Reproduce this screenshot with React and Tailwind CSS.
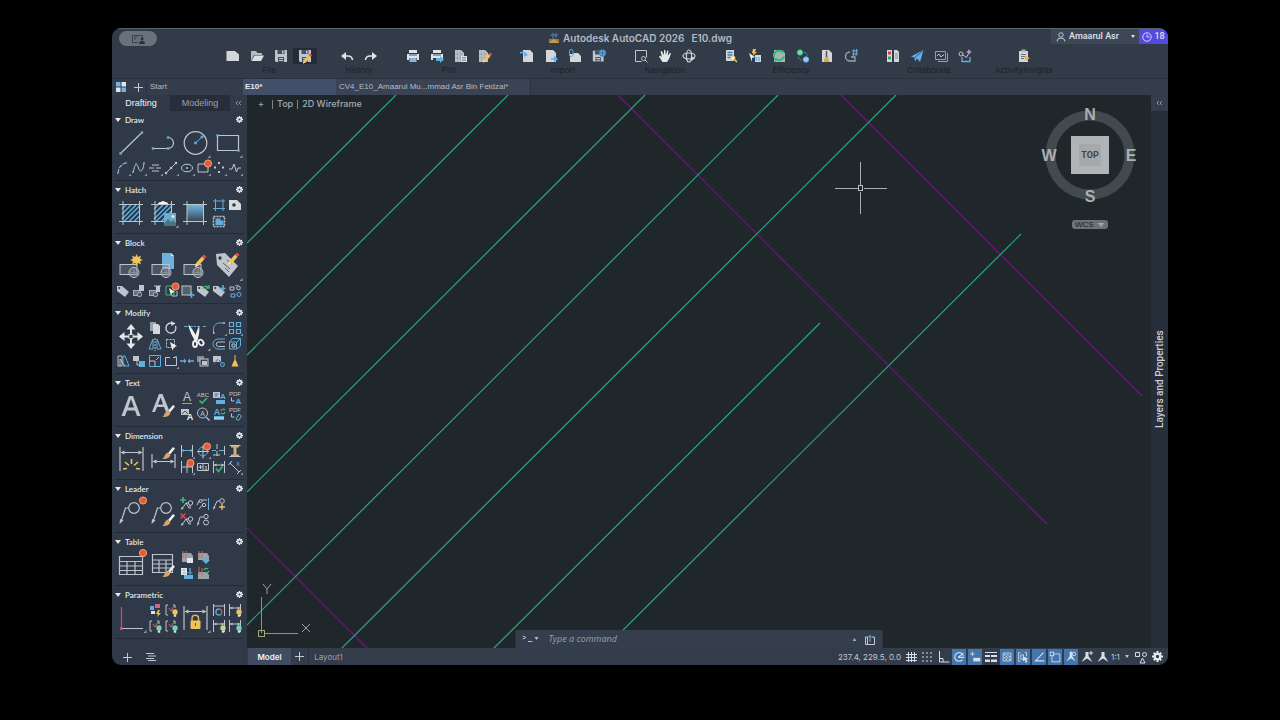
import React from "react";

const G = "#bfc5cd";
const B = "#62aede";
const Y = "#efc35a";
const N = "#39b877";
const R = "#ea5a2e";

const S = ({ d, c = G, w = 1, dash }) => (
  <path d={d} fill="none" stroke={c} strokeWidth={w} strokeDasharray={dash} />
);
const F = ({ d, c = G }) => <path d={d} fill={c} />;
const C = ({ x, y, r, c = G, f = "none", w = 1 }) => (
  <circle cx={x} cy={y} r={r} stroke={c} fill={f} strokeWidth={w} />
);
const Dots = ({ at, c = B, s = 2 }) =>
  at.map(([x, y]) => <rect key={x + "," + y} x={x - s / 2} y={y - s / 2} width={s} height={s} fill={c} />);
const T = ({ x, y, s, c = G, children, b }) => (
  <text x={x} y={y} fontSize={s} fill={c} fontWeight={b ? 700 : 400} textAnchor="middle" fontFamily="Liberation Sans, sans-serif">
    {children}
  </text>
);
const At = ({ x, y, children }) => <g transform={`translate(${x} ${y})`}>{children}</g>;

const Badge = ({ x, y, r = 3.6 }) => <circle cx={x} cy={y} r={r} fill={R} stroke="#f2b7a0" strokeWidth=".8" />;
const Brush = () => (
  <>
    <F d="M11 0l2 1.500-5 6L6 6z" c="#eef0f2" />
    <F d="M5.500 5.500l3 2.500c-1 3-4 4.500-8 4 2-1.500 2-5 5-6.500z" c="#d9a566" />
  </>
);
const Pencil = () => (
  <>
    <F d="M1 9L0 13l4-1.500 5.500-6.500L7 2.500z" c={Y} />
    <F d="M7 2.500L9.500 5l2-2L9 .5z" c="#e5503f" />
    <F d="M1 10L0 13l3-1.200z" c="#f4ead2" />
  </>
);
const Bulb = ({ c = Y }) => (
  <>
    <circle cx="3" cy="3" r="2.700" fill={c} />
    <F d="M1.800 5.500h2.400v2.200H1.800z" c="#e6e2d0" />
  </>
);
const BlockGlyph = () => (
  <>
    <rect x="5" y="14.500" width="17" height="10" fill="#6f7782" fillOpacity=".45" stroke={G} strokeWidth="1" />
    <circle cx="19" cy="22.500" r="5" fill="#9aa1aa" fillOpacity=".35" stroke={G} />
    <S d="M16 22.500h6M19 19.500v6" c="#8b929c" />
  </>
);
const MiniBlock = () => (
  <>
    <rect x="2.500" y="7.500" width="7" height="5" fill="#68707b" stroke={G} strokeWidth=".8" />
    <circle cx="8.500" cy="11.500" r="2.200" fill="#4a525e" stroke={G} strokeWidth=".8" />
  </>
);
const MiniTag = () => (
  <>
    <F d="M2 3h5l7 6-4 5-8-6z" />
    <circle cx="4.300" cy="5" r="1" fill="#2f3745" />
  </>
);
const HatchFill = () => (
  <>
    <rect x="7" y="8" width="18" height="16" fill="#25384b" />
    <S d="M7 12l4-4M7 17l9-9M7 22l14-14M9.500 24L25 8.500M14.500 24L25 13.500M19.500 24L25 18.500" c={B} w={1.5} />
    <S d="M8 4v24M24.500 4v24M4 7.500h24M4 24.500h24" />
  </>
);
const MiniLeader = () => (
  <>
    <C x={11.5} y={7} r={2.2} />
    <S d="M9.500 7H7L3 13M11 9v4M7 7l3 5" />
    <F d="M2 14l.5-3 2.200 1.500z" />
  </>
);
const MiniDim = () => (
  <>
    <S d="M2.500 2v12M13.500 2v12" />
    <S d="M3 6h10" />
    <F d="M3 6l2.500-1.500v3zM13 6l-2.500-1.500v3z" />
  </>
);
const Floppy = () => (
  <>
    <F d="M2 2h12v12H3l-1-1z" />
    <path d="M4.500 2h7v4h-7zM5 9h6v5H5z" fill="#47505d" />
    <F d="M6 10h4v1H6zM6 12h4v1H6zM9 2.500h1.500v3H9z" />
  </>
);
const Sheet = () => (
  <>
    <F d="M2 2h6l3 3v9H2z" />
    <path d="M4.500 2v12M2 6h8M2 10h8M7.500 2v12" stroke="#8e959e" strokeWidth=".6" />
  </>
);
const Printer = () => (
  <>
    <F d="M4 2h8v3H4zM2 6h12v6h-2v-2H4v2H2z" c="#dfe3e6" />
    <path d="M4 6.500h8v1H4z" fill="#4b5360" />
  </>
);

const big = {
  line: (<><S d="M5.500 26.500L27 5.500" w={1.2} /><Dots at={[[5.5, 26.5], [27, 5.5]]} s={2.4} /></>),
  polyline: (<><S d="M6 21.500h15a5.500 5.500 0 000-11" w={1.2} /><Dots at={[[6, 21.5], [21, 21.5], [21, 10.5]]} s={2.4} /></>),
  circle: (<><C x={16.5} y={16} r={11.3} w={1.2} /><S d="M16.500 16l6.500-6" c={B} /><Dots at={[[16.5, 16], [23, 10]]} s={2.6} /></>),
  rect: (<><S d="M6.500 8.500h21v15h-21z" w={1.2} /><Dots at={[[6.5, 8.5], [27.5, 23.5]]} s={2.4} /></>),
  hatch: <HatchFill />,
  hatchEdit: (<><HatchFill /><F d="M11 7q0-2 3-2 2-2 4 0 3 0 3 2z" c="#f2f4f5" /><rect x="17" y="16" width="12" height="13" fill="#6fa9cf" /><circle cx="26" cy="19.500" r="1.500" fill="#f7e9a8" /><F d="M17 27l4-5 3 3 2-2 3 3v3H17z" c="#49787b" /></>),
  gradient: (<><defs><linearGradient id="fade" x1="0" y1="0" x2="0" y2="1"><stop offset="0" stopColor="#6db6e2" /><stop offset="1" stopColor="#3b4655" /></linearGradient></defs><rect x="8" y="8" width="17" height="16" fill="url(#fade)" /><S d="M8 4v24M24.500 4v24M4 7.500h24M4 24.500h24" /></>),
  blockNew: (<><BlockGlyph /><path d="M21.500 4l1.300 3L26 5.700l-1 3 3 1.300-3 1.200 1 3-3.200-1.200-1.300 3-1.300-3-3.200 1.200 1-3L15 10l3-1.300-1-3L20.200 7z" fill={Y} /></>),
  blockInsert: (<><F d="M15 3h9l3 3v13H15z" c="#6fb0dc" /><F d="M24 3l3 3h-3z" c="#cfe5f4" /><BlockGlyph /></>),
  blockEdit: (<><BlockGlyph /><At x={16} y={4}><Pencil /></At></>),
  tagEdit: (<><F d="M5 4l9-1 13 13-9 11L6 15z" /><circle cx="9" cy="8" r="1.700" fill="#2f3745" /><S d="M12 13l7 6M14 18l4 4M16 10l5 4" c="#59616d" /><At x={17} y={2}><Pencil /></At></>),
  move: (<><S d="M16 6v21M5 16.500h22" c="#e3e6ea" w={2} /><F d="M16 4l4.500 5.500h-9zM16 29l4.500-5.500h-9zM4 16.500l5.500-4.500v9zM28 16.500L22.500 12v9z" c="#e3e6ea" /><rect x="14" y="14.500" width="4" height="4" fill="#2f3745" stroke="#e3e6ea" strokeWidth=".8" /></>),
  trim: (<><S d="M5 6.500h12" c={B} dash="4 1" /><S d="M18 6.500h11" c={B} dash="3 3" /><F d="M9.500 4.500c3 3 7 10 9.500 15l-2.500 2C14 18 9.500 9 9.500 4.500z" c="#f0f2f4" /><F d="M20 6c1 4 0 10-2 15l-3-1c1.500-5 3-10 5-14z" c="#f0f2f4" /><ellipse cx="16" cy="24" rx="2" ry="3" fill="none" stroke="#f0f2f4" strokeWidth="1.800" /><ellipse cx="22" cy="22.500" rx="2.300" ry="3" transform="rotate(-35 22 22.500)" fill="none" stroke="#f0f2f4" strokeWidth="1.800" /></>),
  text: <path d="M6.500 26L14 6h4l7.500 20H22l-2-5.500h-8L10 26zM13 17.500h6L16 9z" fill={G} />,
  textStyle: (<><path d="M5 22L12 4h3.500L22 20l-3 2-2-5h-7l-2 5zM11 14.500h5L13.700 7.500z" fill={G} /><At x={15} y={15}><Brush /></At></>),
  dim: (<><S d="M5 4v24M28 4v24M6 9.500h21" w={1.2} /><F d="M5.500 9.500l4-2v4zM27.500 9.500l-4-2v4z" /><S d="M8 26l4-.5M10 19l4 3.500M16.500 16v5M23 19l-4 3.500M25 26l-4-.5" c={Y} w={1.6} /></>),
  dimStyle: (<><S d="M5 11v14M28 11v14M6 18.500h21" w={1.2} /><F d="M5.500 18.500l4-2v4zM27.500 18.500l-4-2v4z" /><At x={15} y={4}><Brush /></At></>),
  leader: (<><C x={19} y={12} r={5.3} w={1.2} /><S d="M13.500 12h-3L6 26" w={1.2} /><F d="M4.500 28l.5-5 3.500 1.500z" /><Badge x={28} y={4.5} /></>),
  leaderStyle: (<><C x={19} y={12} r={5.3} w={1.2} /><S d="M13.500 12h-3L6 26" w={1.2} /><F d="M4.500 28l.5-5 3.500 1.500z" /><At x={15} y={18}><Brush /></At></>),
  table: (<><S d="M4.500 7.500h23v18h-23zM4.500 12.500h23M4.500 17h23M4.500 21.500h23M12 12.500v13M20 12.500v13" w={1.2} /><Badge x={28} y={4} /></>),
  tableStyle: (<><S d="M5.500 5.500h20v18h-20zM5.500 11h20M5.500 15h20M5.500 19h20M12 11v12M19 11v12" w={1.2} /><At x={15} y={16}><Brush /></At></>),
  constraint: (<><S d="M6.500 5v22" c="#c4506e" w={1.3} /><S d="M6.500 26.500H28" /><F d="M5 25h3v3H5z" c="#c4506e" /></>),
  dimLock: (<><S d="M5 4v24M28 4v24M6 9.500h21" w={1.2} /><F d="M5.500 9.500l4-2v4zM27.500 9.500l-4-2v4z" /><S d="M13 20v-3.500a3.200 3.200 0 016.500 0V20" c="#d7b45b" w={1.5} /><rect x="11.500" y="18.500" width="10" height="8.500" rx="1" fill={Y} /><rect x="16" y="21" width="1" height="3" fill="#6d5523" /></>),
};

const sm = {
  arc: (<><S d="M3 13C4 7 6 4 11 3" dash="4 1" /><Dots at={[[3, 13], [6, 6], [11, 3]]} s={1.6} /></>),
  spline: (<><S d="M2 13C4 3 6 3 7.500 8S12 12 13 3" /><Dots at={[[2, 12], [5, 4], [13, 3]]} s={1.6} /></>),
  multiline: <S d="M5 5h7M2 8h5M5 11h7M9 8h5" />,
  ray: (<><S d="M3 13L13 3" /><Dots at={[[3, 13], [8, 8], [13, 3]]} c={G} s={2.2} /></>),
  ellipse: (<><ellipse cx="8" cy="8" rx="5.500" ry="3.800" fill="none" stroke={G} /><Dots at={[[8, 8]]} /></>),
  region: (<><S d="M3 4h10v8H3z" /><Badge x={13} y={3.5} /></>),
  points: <Dots at={[[8, 3], [4, 7.5], [12, 7.5], [8, 12]]} c={G} />,
  breakline: <S d="M2 9h3l2-5 2.500 8 1.500-4h3" />,
  boundary: <S d="M4.500 2v12M12 2v12M2 4h12M2 11.500h12" c={B} />,
  wipeout: (<><F d="M2 3h8l4 4v6H2z" c="#d8dce0" /><circle cx="7" cy="8" r="1.800" fill="#2f3745" /></>),
  separate: (<><S d="M2.500 3.500h11v10h-11z" dash="2 1" c={G} w={1.5} /><F d="M4.500 5.500h5v2h3v4.500h-8z" c={B} /></>),
  tag: <MiniTag />,
  blk1: (<><MiniBlock /><F d="M8 2h5v6H8z" /></>),
  blk2: (<><MiniBlock /><F d="M9 3h4v6H9z" /><S d="M7 3h7" /></>),
  blk3: (<><S d="M3 3h8v9H3z" c={N} /><F d="M6 5l6 4-3 1-1 3z" c="#eceef0" /><S d="M9 13h5V8" /><Badge x={12.5} y={3.5} /></>),
  blk4: (<><rect x="3" y="3" width="9" height="9" fill="#56606c" stroke={G} /><S d="M12.500 9v6M9.500 12h6" c={B} w={1.5} /></>),
  tagSync: (<><MiniTag /><S d="M8 6a3 3 0 015-2M14 2v3h-3" c={N} w={1.3} /></>),
  tagAdd: (<><MiniTag /><S d="M12 2v7M8.500 5.500h6" c={B} w={1.5} /></>),
  replace: (<><S d="M3 4h4v3H3z" /><C x={11.5} y={5} r={1.8} /><S d="M4 14h4v-3H4z" c={B} /><C x={12} y={11.5} r={2} c={B} /><S d="M8 3q2-2 4 0" c={B} /></>),
  copy: (<><F d="M3 2h6v9H3z" c="#99a0a9" /><F d="M6 4h5l2 2v8H6z" c="#d5d9de" /></>),
  rotate: (<><S d="M10 3.500A5 5 0 1012.500 6" w={1.3} c="#d5d9de" /><F d="M8 1l4.500 2.500L8.500 6z" c="#d5d9de" /></>),
  mirror: (<><S d="M6 3v10H2zM10 3v10h4z" c={B} /><S d="M8 2v13" dash="2 1" /></>),
  select: (<><S d="M3.500 3.500h8v8h-8z" dash="2 1" /><F d="M7 6l7 4-3 1-1.500 3.500z" c="#f0f2f4" /></>),
  fillet: (<><S d="M2.500 14V10C2.500 5 5 3 9 3h5" c={B} /><Dots at={[[3, 13], [13, 3]]} c={G} s={1.5} /></>),
  array: <S d="M2.500 2.500h4v4h-4zM9.500 2.500h4v4h-4zM2.500 9.500h4v4h-4zM9.500 9.500h4v4h-4z" c={B} w={1.2} />,
  offset: (<><S d="M14 3H7a5 5 0 000 10h7" c={B} /><S d="M14 6H7.500a2 2 0 000 4.500H14" /></>),
  box3d: (<><S d="M2.500 6h7v7h-7zM2.500 6l3-3.500h8L10 6M13.500 3v7L10 13" c={B} /><S d="M5 8h3v3H5z" /></>),
  stretch: (<><S d="M3 3h4v10H3z" /><S d="M8 3h2l4 10H8z" c={B} /><S d="M5 13V6l5 7" /></>),
  scaleCopy: (<><F d="M2 3h6v5H2z" /><rect x="8" y="8" width="6" height="6" fill={B} /><S d="M6 8v4h3" /></>),
  scale: (<><S d="M2.500 2.500h11v11h-11z" c={B} /><S d="M2.500 8h5.500v5.500M9 7l3-3" /></>),
  breakAt: (<><S d="M2.500 4.500h11v8h-11z" /><F d="M7 3h3v3H7z" c="#2f3745" /><Dots at={[[13, 4]]} /></>),
  join: (<><S d="M1 8h5M10 8h5" c={B} w={1.3} /><F d="M7.500 8L5 5.500v5zM8.500 8L11 5.500v5z" c={B} /></>),
  order: (<><rect x="2" y="3" width="7" height="6" fill="#838b95" /><rect x="5" y="6" width="8" height="7" fill="#3a4350" stroke={G} /><F d="M7 8h5v4H7z" /></>),
  overkill: (<><rect x="2" y="3" width="8" height="6" fill={G} /><S d="M3 11l4-5M8 7l5 6" c="#3c6f93" /><C x={11.5} y={11.5} r={2} c={B} /></>),
  purge: (<><S d="M8 2v6" c="#c98b48" w={1.5} /><F d="M7 7.500h2l2.500 6h-7z" c={Y} /></>),
  textLine: (<><T x={8} y={11} s={12}>A</T><S d="M3 13.500h10" c={B} /></>),
  spell: (<><T x={8} y={6.5} s={6}>ABC</T><S d="M4.500 10.500l2.500 2.500 5-5" c={N} w={1.7} /></>),
  field: (<><F d="M2 2h7v6H2z" /><S d="M3.500 4h4M3.500 6h3" c="#3c6f93" /><rect x="5" y="10" width="9" height="4" fill={B} /><T x={12} y={9} s={8} c={B} b>A</T></>),
  pdfText: (<><T x={8} y={6} s={6}>PDF</T><S d="M4.500 7.500V11h3" /><T x={11.5} y={14} s={8} c={B} b>A</T></>),
  textImg: (<><F d="M2 3h8v6H2z" /><S d="M3 8l3-3 3 3" c="#4b5461" /><T x={11} y={13.5} s={9} c="#f0f2f4" b>A</T></>),
  find: (<><C x={7.5} y={7} r={5} /><T x={7.5} y={9.7} s={7}>A</T><S d="M11 11l3.500 3.500" w={1.3} /></>),
  textUpd: (<><T x={6} y={9} s={9} c={B} b>A</T><rect x="3" y="10" width="10" height="4" fill={B} /><S d="M3 12h10" c="#dfe6ec" /><S d="M10 5a2.300 2.300 0 014-1M14 6a2.300 2.300 0 01-4 1" c={N} w={1.2} /></>),
  pdfGeom: (<><T x={8} y={6} s={6}>PDF</T><S d="M4.500 7.500V11h3" /><S d="M9 13l3-5 2.500 2-3 4.500z" c={B} /></>),
  dimLin: (<><S d="M2.500 2v12M13.500 2v12" /><S d="M3 7.500h10" c={B} /><Dots at={[[4, 7.5], [12, 7.5]]} /></>),
  center: (<><C x={8} y={8.5} r={4.5} c={B} /><S d="M8 2.500v13M2 8.500h12" /><Badge x={12} y={3.5} /></>),
  dimBreak: (<><S d="M6 1v14" dash="5 2" /><S d="M1 7.500h4M8 7.500h5" c={B} /><S d="M13.500 3v9M2 12h7" /></>),
  dimSpace: (<><F d="M4 2.500h8v2H9.500v7H12v2H4v-2h2.500v-7H4z" c="#c9b27a" /><S d="M2.500 2.500h11M2.500 13.500h11" /></>),
  dimCont: (<><S d="M2.500 2v12M8 5v9M13.500 2v12M2.500 8h11" /><Badge x={11.5} y={4} /></>),
  tol: (<><S d="M2.500 4.500h11v7h-11zM8 4.500v7" /><S d="M5.500 6v4M3.500 8h4" /><T x={11} y={10.5} s={6} b>1</T></>),
  inspect: (<><MiniDim /><S d="M5 9.500l2.500 3 4-5" c={N} w={1.6} /></>),
  oblique: (<><S d="M3 4l9 9M1.500 6L5 2M10 15l4-4" /><T x={11} y={7} s={7} c={B}>x</T></>),
  ldAdd: (<><MiniLeader /><S d="M4 1v6M1 4h6" c={N} w={1.6} /></>),
  ldAlign: (<><C x={5.5} y={5} r={1.5} /><C x={9} y={9} r={1.7} /><S d="M4 5L2 9M7.500 9L4 13M7 4h5" /><S d="M13.500 2v12" c={B} /></>),
  ldCollect: (<><C x={11} y={5} r={2.3} /><S d="M8.500 5H6L3 12" /><F d="M2 14l.5-3.500 2 1z" /><S d="M11 8v6M8 11h6" c={Y} w={1.3} /></>),
  ldDel: (<><MiniLeader /><S d="M1.500 1.500l5 5M6.500 1.500l-5 5" c="#df4457" w={1.5} /></>),
  ldPair: (<><C x={11} y={4.5} r={2.2} /><C x={11} y={10.5} r={2.5} /><S d="M8.500 5H5L3 12" /><F d="M2 14l.5-3.500 2 1z" /></>),
  tb1: (<><F d="M3 4h9l2 3v6H3z" c="#9aa1aa" /><S d="M4 2v7M7 2v7" c="#c46a54" /><F d="M8 9h6v5H8z" c="#e1e4e8" /></>),
  tb2: (<><F d="M3 4h9l2 3v4H3z" c="#9aa1aa" /><S d="M4 2v7M7 2v7" c="#c46a54" /><F d="M9.500 8h3v3H15l-4 4-4-4h2.500z" c={B} /></>),
  tb3: (<><F d="M2 3h6v7H2z" c="#dfe6ec" /><S d="M3.500 5h3M3.500 8h3" c={B} /><rect x="5" y="10" width="9" height="4" fill={B} /><F d="M10 3h2v4h2l-3 3-3-3h2z" c="#4887b6" /></>),
  tb4: (<><F d="M3 7h9l2 3v4H3z" c="#9aa1aa" /><S d="M4 2v7M7 3v7" c="#c46a54" /><S d="M9 5a2.500 2.500 0 014-1M14 6a2.500 2.500 0 01-4 1" c={N} w={1.3} /></>),
  pc1: (<><F d="M8 2h5v4H8z" c="#c5698a" /><F d="M3 4h4v4H3z" c={B} /><F d="M4 9h4v3H4z" c="#dfe3e8" /><F d="M11 8h2l-1.500 3H14l-4 4 1-3H9z" c={Y} /></>),
  pc2: (<><S d="M5 3H3v10h2M10 3h2v3" /><S d="M6 6l2 3 3-5" c="#c46a78" /><At x={9} y={7}><Bulb /></At></>),
  pc3: (<><S d="M5 3H3v10h2M10 3h2v3" /><S d="M6 6l2 3 3-5" c="#c46a78" /><At x={9} y={7}><Bulb c="#79d1b0" /></At></>),
  pc4: (<><S d="M5 3H3v10h2M10 3h2v3" /><S d="M6 6l2 3 3-5" c="#c46a78" /><At x={9} y={7}><Bulb c="#67d3d0" /></At></>),
  pd1: (<><S d="M2.500 2v12M13.500 2v12M3 4h10" /><path d="M8 7a3 3 0 012.500 4.500" fill="none" stroke="#dd5a60" strokeWidth="1.300" /><path d="M8 7a3 3 0 102.500 4.500" fill="none" stroke={B} strokeWidth="1.300" /></>),
  pd2: (<><MiniDim /><At x={9} y={7}><Bulb /></At></>),
  pd3: (<><MiniDim /><At x={9} y={7}><Bulb c="#c9d67c" /></At></>),
  pd4: (<><MiniDim /><At x={9} y={7}><Bulb c="#67d3d0" /></At></>),
};

const sections = [
  { name: "Draw", rows: [[["b", "line"], ["b", "polyline"], ["b", "circle", 1], ["b", "rect", 1]], [["s", 8, ["arc+", "spline+", "multiline+", "ray+", "ellipse+", "region+", "points+", "breakline+"]]]] },
  { name: "Hatch", rows: [[["b", "hatch"], ["b", "hatchEdit", 1], ["b", "gradient"], ["s", 2, ["boundary", "wipeout", "separate"]]]] },
  { name: "Block", rows: [[["b", "blockNew"], ["b", "blockInsert"], ["b", "blockEdit"], ["b", "tagEdit", 1]], [["s", 8, ["tag", "blk1", "blk2", "blk3", "blk4", "tagSync", "tagAdd", "replace"]]]] },
  { name: "Modify", rows: [[["b", "move"], ["s", 2, ["copy", "rotate", "mirror", "select"]], ["b", "trim", 1], ["s", 2, ["fillet+", "array+", "offset", "box3d"]]], [["s", 8, ["stretch", "scaleCopy", "scale", "breakAt+", "join", "order", "overkill", "purge"]]]] },
  { name: "Text", rows: [[["b", "text"], ["b", "textStyle"], ["s", 4, ["textLine", "spell", "field", "pdfText", "textImg", "find", "textUpd", "pdfGeom"]]]] },
  { name: "Dimension", rows: [[["b", "dim"], ["b", "dimStyle"], ["s", 4, ["dimLin+", "center+", "dimBreak", "dimSpace", "dimCont+", "tol", "inspect", "oblique+"]]]] },
  { name: "Leader", rows: [[["b", "leader"], ["b", "leaderStyle"], ["s", 3, ["ldAdd", "ldAlign", "ldCollect", "ldDel", "ldPair"]]]] },
  { name: "Table", rows: [[["b", "table"], ["b", "tableStyle"], ["s", 2, ["tb1", "tb2", "tb3", "tb4"]]]] },
  { name: "Parametric", rows: [[["b", "constraint", 1], ["s", 2, ["pc1", "pc2", "pc3", "pc4"]], ["b", "dimLock", 1], ["s", 2, ["pd1", "pd2", "pd3", "pd4"]]]] },
];

const colClass = { 2: "grid grid-cols-2", 3: "grid grid-cols-3", 4: "grid grid-cols-4", 8: "grid grid-cols-8" };

function Tool({ id, large, more }) {
  return (
    <button type="button" aria-label={id} className={large ? "block size-8" : "block size-4"}>
      <svg viewBox={large ? "0 0 32 32" : "0 0 16 16"} className="block size-full overflow-visible">
        {large ? big[id] : sm[id]}
        {more && <path d={large ? "M31.500 28v3h-3z" : "M16 13.500V16h-2.500z"} fill="#9299a3" />}
      </svg>
    </button>
  );
}

const Gear = ({ className }) => (
  <svg viewBox="0 0 16 16" className={className}>
    <path d="M6.500 0h3v3h-3zM6.500 13h3v3h-3zM0 6.500h3v3H0zM13 6.500h3v3h-3zM1.500 3.500l2-2 2.500 2.500-2 2zM12.500 14.500l2-2L12 10l-2 2zM1.500 12.500l2 2L6 12l-2-2zM12.500 1.500l2 2L12 6l-2-2z" fill="currentColor" />
    <circle cx="8" cy="8" r="4" fill="none" stroke="currentColor" strokeWidth="3.200" />
  </svg>
);

function Section({ name, rows }) {
  return (
    <section className="mx-[3px] border-b border-[#242b36] pb-1">
      <header className="flex h-4 items-center justify-between pt-px pr-px">
        <button type="button" className="flex items-center gap-1 font-[Lato,sans-serif] text-[8px] leading-none font-medium text-[#eef1f4]">
          <svg viewBox="0 0 6 4" className="h-1 w-[6px]"><path d="M0 0h6L3 4z" fill="#e6e9ed" /></svg>
          {name}
        </button>
        <button type="button" aria-label={name + " settings"} className="text-[#f1f3f5]">
          <Gear className="size-[7px]" />
        </button>
      </header>
      <div className="flex flex-col gap-px">
        {rows.map((row, i) => (
          <div key={i} className="flex">
            {row.map((cell, j) =>
              cell[0] === "b" ? (
                <Tool key={j} id={cell[1]} large more={cell[2]} />
              ) : (
                <div key={j} className={colClass[cell[1]]}>
                  {cell[2].map((s) => (
                    <Tool key={s} id={s.replace("+", "")} more={s.endsWith("+")} />
                  ))}
                </div>
              )
            )}
          </div>
        ))}
      </div>
    </section>
  );
}

const tb = {
  "New": <F d="M1.500 3H10l4 3.500V13H1.500z" c="#d4d7da" />,
  "Open": (<><F d="M2 13V3h5l1.500 2H13v2H5z" c="#b4b9bf" /><F d="M5.500 7.500H15L12 13H2.500z" c="#dde0e3" /></>),
  "Save": <Floppy />,
  "Save as": (<><Floppy /><At x={6} y={5}><g transform="scale(.8)"><Pencil /></g></At></>),
  "Undo": (<><F d="M2 8l5-4v8z" c="#dfe2e6" /><S d="M6 8h3q4 0 4.500 4" c="#dfe2e6" w={1.7} /></>),
  "Redo": (<><F d="M14 8L9 4v8z" c="#dfe2e6" /><S d="M10 8H7q-4 0-4.500 4" c="#dfe2e6" w={1.7} /></>),
  "Print": (<><Printer /><F d="M4.500 10h7v4h-7z" c="#7fb9e0" /></>),
  "Batch plot": (<><Printer /><F d="M7 10h4V8l4 3.500-4 3.500v-2H7z" c={B} /></>),
  "Page setup": (<><Sheet /><F d="M8 8h6v6H8z" c="#dfe3e6" /><path d="M9 9.500h4M9 11h4M9 12.500h4" stroke="#737b86" strokeWidth=".7" /></>),
  "Plot edit": (<><Sheet /><At x={6} y={4}><g transform="scale(.8)"><Pencil /></g></At></>),
  "Import": (<><F d="M4 2h7l3 3v9H4z" c="#d4d7da" /><S d="M1 5q4-2 6 1" c={B} w={1.6} /><F d="M5 9V4l4 3z" c={B} /></>),
  "Export": (<><F d="M3 2h7l3 3v9H3z" c="#d4d7da" /><S d="M8 11h5" c={B} w={1.6} /><F d="M11 7.500v7l4-3.500z" c={B} /></>),
  "Attach": (<><F d="M3 6h3l1-1h4l3 3v6H3z" c="#d4d7da" /><rect x="2.500" y="1.500" width="3.500" height="7" rx="1.700" fill="none" stroke={B} /></>),
  "Web save": (<><g transform="translate(0 1) scale(.9)"><Floppy /></g><C x={11.5} y={5} r={3.3} c="#3f7fb4" f={B} /><S d="M11.500 2v6M8.500 5h6" c="#335f86" w={0.7} /></>),
  "Zoom window": (<><S d="M2.500 2.500h11v7M2.500 2.500v11h6" /><C x={10.5} y={10.5} r={2} /><S d="M12 12l2.500 2.500" /></>),
  "Pan": <F d="M5.500 14L2 8.500l1-1L5 9 3.500 3.500 4.800 3 7 7V2h1.300l.5 5 1.500-4.500 1.200.3-.8 5 2.300-3 1 .7L12 11l-2 3z" c="#e4e7ea" />,
  "Orbit": (<><ellipse cx="8" cy="8" rx="6" ry="3" fill="none" stroke="#d4d7da" strokeWidth="1.200" /><ellipse cx="8" cy="8" rx="2.600" ry="6" fill="none" stroke="#d4d7da" strokeWidth="1.200" /><F d="M10 8l4 2.500L10 13z" c="#d4d7da" /></>),
  "Quick select": (<><F d="M3 2h8v11H3z" c="#d4d7da" /><S d="M4.500 4.500h5M4.500 7h5M4.500 9.500h3" c="#3f7fb4" w={1.3} /><C x={10} y={10} r={2} c={Y} f="#fff" /><S d="M11.500 11.500L14 14" c={Y} w={1.5} /></>),
  "Select similar": (<><F d="M2 5l6 4-3 1v4z" c="#eceef0" /><F d="M8 7h6v7H8z" c="#d4d7da" /><S d="M9.500 9v4M12 9v4" c={B} w={1.3} /><F d="M6 1h3L8 4h2L5.500 8l1-3H5z" c={Y} /></>),
  "Refresh": (<><F d="M3 2h7l4 3v9H3z" c="#aab3b8" /><S d="M3 9a5 5 0 018-5" c={N} w={2} /><S d="M13 8a5 5 0 01-8 3" c={N} w={2} /><F d="M10 2l3.500 1L11 6zM3 10l4 1-3 3z" c={N} /></>),
  "Connect": (<><C x={5} y={4.5} r={2.7} c={N} f="#7fdca8" /><C x={11} y={11.5} r={2.7} c={B} f="#93cdf0" /><S d="M9 4.500q3 0 3 3M3.500 9q0 3 3 3" c="#4a8db8" dash="2 1" /></>),
  "Purge": (<><F d="M3 2h7l3 3v9H3z" c="#d4d7da" /><S d="M7.500 3v6" c="#4c5460" w={1.5} /><F d="M6 9h3l1.500 5h-6z" c="#d9a94d" /></>),
  "Count": (<><S d="M7 4a4.500 4.500 0 100 9h5V9H8" w={1.3} c="#9ea5ae" /><S d="M9 3h6M9 6h6M11 1l-.7 7M13.700 1L13 8" c={B} /></>),
  "Compare": (<><F d="M2 2h5v12H2z" c="#d4d7da" /><Dots at={[[4.5, 10]]} c="#2fa75f" s={3} /><Dots at={[[4.5, 5]]} c="#d6404a" s={3} /><F d="M9 2h3l2 2v10H9z" c="#d4d7da" /><path d="M10 6h3M10 8h3M10 10h3" stroke="#6b7480" strokeWidth=".8" /></>),
  "Share": (<><F d="M2 8.500L14.500 2 11 14 8 10.500 6 13.500 5.500 9.500z" c="#5fb2ec" /><S d="M14 2.500L6 9.500" c="#2b5678" /></>),
  "Trace": (<><S d="M2.500 3.500h10v8h-10z" c={B} /><S d="M5 13.500h9.500V5" c={B} /><S d="M4 8l2-2 2 3 2-2h1" /></>),
  "Markup": (<><S d="M5 9v4.500h8V9" c={B} w={1.3} /><C x={4} y={6} r={2} /><S d="M5.500 6.500l4 3 2-4" /><F d="M12 1l1 2 2 1-2 1-1 2-1-2-2-1 2-1z" c="#c58fe8" /></>),
  "Insights": (<><F d="M3 3h9v11H3z" c="#d4d7da" /><F d="M5.500 1.500h4V4h-4z" c="#aeb4bb" /><path d="M5 6.500h5M5 8.500h5M5 10.500h3" stroke="#5d6672" strokeWidth=".9" /><F d="M9 8l5 2-2.500 1.500 1 2.500-4-3z" c="#f0b25c" /></>),
};

const groups = [
  ["File", ["New", "Open", "Save", "Save as"]],
  ["History", ["Undo", "Redo"]],
  ["Plot", ["Print", "Batch plot", "Page setup", "Plot edit"]],
  ["Import", ["Import", "Export", "Attach", "Web save"]],
  ["Navigation", ["Zoom window", "Pan", "Orbit"]],
  ["Efficiency", ["Quick select", "Select similar", "Refresh", "Connect", "Purge", "Count"]],
  ["Collaborate", ["Compare", "Share", "Trace", "Markup"]],
  ["ActivityInsights", ["Insights"]],
];

const Plus = () => (
  <svg viewBox="0 0 9 9" className="size-[9px]"><path d="M4.500 0v9M0 4.500h9" stroke="#c3c9d1" /></svg>
);
const Chevrons = () => (
  <svg viewBox="0 0 7 6" className="h-[6px] w-[7px]"><path d="M3 1L1 3l2 2M6 1L4 3l2 2" fill="none" stroke="#949dab" strokeWidth=".9" /></svg>
);

function Header() {
  return (
    <header className="relative flex flex-col border-t border-[#5a616b] bg-[#323b48]">
      <div className="flex h-[18px] items-center justify-center gap-[3px] font-[Inter,sans-serif] text-[10px] font-semibold text-[#b3bac5]">
        <svg viewBox="0 0 12 12" className="size-3">
          <path d="M1 7h10v4H1z" fill="#9b7b45" /><path d="M1 11l5-4 5 4z" fill="#c99a4e" />
          <path d="M2 3h8M5 1v6M8 1v5" stroke="#4c86b6" fill="none" />
        </svg>
        <h1>Autodesk AutoCAD 2026</h1>
        <span className="pl-1">E10.dwg</span>
      </div>
      <button type="button" aria-label="Share screen" className="absolute top-0.5 left-[7px] flex h-[15px] w-[38px] items-center justify-center rounded-full bg-[#69717d]">
        <svg viewBox="0 0 14 10" className="h-[10px] w-[14px]">
          <path d="M7 8.500H1.500v-7h10V4M3 3h3M3 5h2" fill="none" stroke="#3a424e" />
          <circle cx="11" cy="5" r="1.500" fill="#2a313c" /><path d="M8 10q0-3 3-3t3 3z" fill="#2a313c" />
        </svg>
      </button>
      <div className="absolute top-0 right-0 flex h-[15px] font-[Roboto,sans-serif] text-[9px] font-medium text-[#dde2ea]">
        <button type="button" className="flex w-22 items-center gap-[3px] bg-[#3d4757] pr-1 pl-[5px]">
          <svg viewBox="0 0 10 10" className="size-[10px]"><circle cx="5" cy="3" r="2.200" fill="none" stroke="#c2c8d0" /><path d="M1 9.500Q1 6 5 6t4 3.500" fill="none" stroke="#c2c8d0" /></svg>
          Amaarul Asr
          <svg viewBox="0 0 4 3" className="ml-auto h-[3px] w-1"><path d="M0 0h4L2 3z" fill="#dde2ea" /></svg>
        </button>
        <button type="button" className="flex w-[29px] items-center justify-center gap-0.5 bg-[#5549e0]">
          <svg viewBox="0 0 10 10" className="size-[10px]"><circle cx="5" cy="5" r="4.200" fill="none" stroke="#d8d5fb" /><path d="M5 2.500V5h2.500" fill="none" stroke="#d8d5fb" /></svg>
          18
        </button>
      </div>
      <div className="flex gap-[18px] pt-px pb-0.5 pl-[109px]">
        {groups.map(([name, items]) => (
          <div key={name} className="flex flex-col items-center">
            <div className="flex">
              {items.map((n) => (
                <button key={n} type="button" aria-label={n} className={n === "Save as" ? "flex h-4 w-6 justify-center bg-[#252c37]" : "flex h-4 w-6 justify-center"}>
                  <svg viewBox="0 0 16 16" className="size-4">{tb[n]}</svg>
                </button>
              ))}
            </div>
            <span className="h-3 font-[Inter,sans-serif] text-[8px] leading-3 text-[#1b222c]">{name}</span>
          </div>
        ))}
      </div>
    </header>
  );
}

function FileTabs() {
  return (
    <nav className="flex h-[17px] border-t border-[#29313d] bg-[#333d4c] font-['Liberation_Sans',Arial,sans-serif] text-[8px] text-[#b4bcc8]">
      <button type="button" aria-label="Home" className="flex w-[18px] items-center justify-center">
        <svg viewBox="0 0 10 10" className="size-[10px]"><path d="M0 0h4.500v4.500H0zM5.500 5.500H10V10H5.500z" fill="#6fb5e6" /><path d="M5.500 0H10v4.500H5.500zM0 5.500h4.500V10H0z" fill="#dfe6ec" /></svg>
      </button>
      <button type="button" aria-label="New tab" className="flex w-4 items-center justify-center"><Plus /></button>
      <button type="button" className="w-[97px] border-l border-[#29313d] pl-[3px] text-left">Start</button>
      <button type="button" className="w-[93px] bg-[#434f68] pl-0.5 text-left font-bold text-[#e8ecf2]">E10*</button>
      <button type="button" className="border-r border-[#29313d] bg-[#394353] pr-[22px] pl-[3px] text-left font-medium">CV4_E10_Amaarul Mu...mmad Asr Bin Feidzal*</button>
    </nav>
  );
}

function Sidebar() {
  return (
    <aside className="flex w-[135px] shrink-0 flex-col bg-[#303947]">
      <div className="flex h-4 bg-[#272e3a] font-['Liberation_Sans',Arial,sans-serif] text-[9px]">
        <button type="button" className="w-[58px] bg-[#303947] pt-px text-[#f4f6f8]">Drafting</button>
        <button type="button" className="w-[60px] pt-px text-[#9aa2ae]">Modeling</button>
        <button type="button" aria-label="Collapse tools" className="flex flex-1 items-center justify-center bg-[#323b49]"><Chevrons /></button>
      </div>
      {sections.map((s) => <Section key={s.name} {...s} />)}
      <div className="mt-auto flex h-4 items-center gap-[14px] pl-[11px]">
        <button type="button" aria-label="Add panel"><Plus /></button>
        <button type="button" aria-label="Manage panels">
          <svg viewBox="0 0 10 8" className="h-2 w-[10px]"><path d="M0 .5h8M2 3h8M0 5.500h8M2 7.500h8" stroke="#c3c9d1" /></svg>
        </button>
      </div>
    </aside>
  );
}

const green = [
  [149, 0, 0, 148], [261, 0, 0, 260], [398, 0, 0, 397], [531, 0, 0, 530],
  [649, 0, 95, 553], [573, 228, 247, 553], [774, 139, 358, 553],
];
const purple = [[371, 0, 800, 429], [594, 0, 895, 301], [0, 433, 120, 553]];

function Drawing() {
  return (
    <main className="relative min-w-0 flex-1 overflow-hidden bg-[#1f272b]">
      <svg className="absolute inset-0 size-full" strokeWidth="1.200">
        {purple.map((l) => <line key={l} x1={l[0]} y1={l[1]} x2={l[2]} y2={l[3]} stroke="#7d0c88" />)}
        {green.map((l) => <line key={l} x1={l[0]} y1={l[1]} x2={l[2]} y2={l[3]} stroke="#2ba588" />)}
        <g strokeWidth="1">
          <path d="M588 93.500h23M617 93.500h23M613.500 67v24M613.500 97v22" stroke="#a9afb1" />
          <rect x="611.500" y="90.500" width="4" height="5" fill="none" stroke="#b9bebf" />
        </g>
      </svg>
      <div className="absolute top-[3px] left-[11px] flex items-center gap-1 font-[Inter,sans-serif] text-[9px] leading-3 font-medium text-[#a4abae]">
        <button type="button" className="w-2.5 text-left">+</button>
        <span className="h-[9px] w-px bg-[#7e8588]" />
        <button type="button">Top</button>
        <span className="h-[9px] w-px bg-[#7e8588]" />
        <button type="button">2D Wireframe</button>
      </div>
      <svg viewBox="0 0 72 72" className="absolute bottom-0 left-1.5 size-[72px]">
        <path d="M8.500 57V21M12 57.500h33" stroke="#8b9294" />
        <rect x="5.500" y="54.500" width="6" height="6" fill="none" stroke="#9ca87e" />
        <path d="M10 8l4 5 4-5M14 13v5M49 48l8 8M57 48l-8 8" fill="none" stroke="#9aa0a2" />
      </svg>
      <div className="absolute top-2 right-[9px] flex w-[104px] flex-col items-center">
        <svg viewBox="0 0 104 104" className="size-[104px]" fontFamily="Liberation Sans, sans-serif" fontWeight="700" textAnchor="middle">
          <circle cx="52" cy="52" r="39.500" fill="none" stroke="#434a4e" strokeWidth="10" />
          <rect x="33" y="33" width="38" height="38" fill="#b1b4b6" />
          <rect x="41" y="41" width="22" height="22" fill="#a6a9ab" />
          <text x="52" y="55" fontSize="9" fill="#3f454a" fontFamily="Roboto, sans-serif">TOP</text>
          <g fontSize="16" fill="#aaafb1">
            <text x="52" y="17">N</text><text x="93" y="58">E</text><text x="52" y="99">S</text><text x="11" y="58">W</text>
          </g>
        </svg>
        <div className="relative mt-[13px] flex h-[9px] w-9 items-center rounded-[3px] bg-[#6b7375]">
          <select aria-label="Coordinate system" className="h-[9px] w-full appearance-none bg-transparent pl-[3px] font-['Liberation_Sans',Arial,sans-serif] text-[8px] leading-[9px] text-[#1b2226]">
            <option>WCS</option>
          </select>
          <svg viewBox="0 0 6 4" className="pointer-events-none absolute right-1 h-1 w-[6px]"><path d="M.5.500h5L3 3.500z" fill="#8e9697" stroke="#c5cacb" strokeWidth=".6" /></svg>
        </div>
      </div>
      <form className="absolute bottom-0 left-1/2 flex h-[18px] w-[367px] -translate-x-1/2 items-center bg-[#343e4c] pr-[7px] pl-[7px]">
        <button type="button" aria-label="Recent commands">
          <svg viewBox="0 0 17 8" className="h-2 w-[17px]"><path d="M0 1l3.500 1.500L0 4M5.500 6.500H10" fill="none" stroke="#b6bdc7" /><path d="M12 2h4l-2 3z" fill="#b6bdc7" /></svg>
        </button>
        <input aria-label="Command" placeholder="Type a command" className="ml-[9px] min-w-0 flex-1 bg-transparent font-['Noto_Sans',sans-serif] text-[9px] leading-4 italic outline-none placeholder:text-[#929ba7]" />
        <button type="button" aria-label="History" className="mr-2">
          <svg viewBox="0 0 4 3" className="h-[3px] w-1"><path d="M0 3h4L2 0z" fill="#a0a8b3" /></svg>
        </button>
        <button type="button" aria-label="Expand">
          <svg viewBox="0 0 11 11" className="size-[11px]"><path d="M3.500 3H1v7.500h9V3H7.500M3 10V3" fill="none" stroke="#c3c9d1" /><path d="M5.500 8V1.500M3.500 3.500l2-2 2 2" fill="none" stroke="#66b2e2" /></svg>
        </button>
      </form>
    </main>
  );
}

const L = "#d9dee4";
const status = [
  ["Grid", 0, <S d="M5.500 3v10M8.500 3v10M11.500 3v10M3 5.500h11M3 8.500h11M3 11.500h11" c={L} />],
  ["Snap", 0, <Dots at={[[4, 4], [8, 4], [12, 4], [4, 8], [8, 8], [12, 8], [4, 12], [8, 12], [12, 12]]} c={L} s={1.4} />],
  ["Ortho", 0, <S d="M4.500 2v11h10M4.500 9.500H8V13" c={L} />],
  ["Polar", 1, <><S d="M12 11a5 5 0 111-4M7 8.500h7M7 8.500l6-5" c={L} w={1.3} /></>],
  ["Dynamic input", 1, <><S d="M5 2v5M2.500 4.500h5" c={L} /><F d="M6 9h8v4H6z" c={L} /></>],
  ["Lineweight", 0, <><F d="M2 3h12v1H2zM2 6h5v2H2zM8 6h6v2H8zM2 10.500h5v2.500H2zM8 10.500h6v2.500H8z" c={L} /></>],
  ["Transparency", 1, <><S d="M3.500 3.500h9v9h-9z" c={L} /><Dots at={[[5.5, 5.5], [9, 5.5], [7.3, 7.3], [11, 7.3], [5.5, 9], [9, 9], [7.3, 10.8], [11, 10.8]]} c={L} s={1.6} /></>],
  ["Selection cycling", 1, <><S d="M5 3H3v10h2M10 3h2v4" c={L} /><S d="M5.500 5.500h3v5h-3z" c={L} /><F d="M8 7l6 3-2 1 1 3-2 .5-1-3-2 1.500z" c={L} /></>],
  ["Object tracking", 1, <S d="M13 3L4 12.500h10" c={L} w={1.3} />],
  ["Object snap", 1, <><S d="M4.500 4.500h9v9h-9z" c={L} /><rect x="2.500" y="2.500" width="4" height="4" fill="#4276ad" stroke={L} /></>],
  ["Annotation visibility", 1, <><F d="M6.500 2h3v5l4 6-5.500-3.500L2.500 13l4-6z" c={L} /><C x={11.5} y={4.5} r={2} c={L} /></>],
  ["Auto scale", 0, <><F d="M6.500 3h3v4l4 6L8 9.500 2.500 13l4-6z" c={L} /><S d="M12 2v4M10 4h4" c={L} /></>],
];

function StatusBar() {
  return (
    <footer className="flex h-[17px] items-center justify-between bg-[#323c4a] pr-[3px] pl-px font-[Inter,sans-serif] text-[8px] text-[#c0c7d1]">
      <div className="flex h-full">
        <button type="button" className="w-[43px] bg-[#414c62] font-semibold text-[#f0f3f6]">Model</button>
        <button type="button" aria-label="New layout" className="flex w-[17px] items-center justify-center"><Plus /></button>
        <button type="button" className="w-10 border-l border-[#29313d] text-[#99a2af]">Layout1</button>
      </div>
      <div className="flex h-full items-center">
        <output className="mr-0.5">237.4, 229.5, 0.0</output>
        {status.map(([n, on, art]) => (
          <button key={n} type="button" aria-label={n} aria-pressed={!!on} className={on ? "size-4 border-x border-[#323c4a] bg-[#4276ad]" : "size-4"}>
            <svg viewBox="0 0 16 16" className="size-full overflow-visible">{art}</svg>
          </button>
        ))}
        <svg viewBox="0 0 16 16" className="size-4"><F d="M6.500 3h3v4l4 6L8 9.500 2.500 13l4-6z" c={L} /></svg>
        <div className="relative flex w-[22px] items-center">
          <select aria-label="Annotation scale" className="w-full appearance-none bg-transparent leading-4 text-[#c0c7d1]"><option>1:1</option></select>
          <svg viewBox="0 0 4 3" className="pointer-events-none absolute right-1 h-[3px] w-1"><path d="M0 0h4L2 3z" fill="#c0c7d1" /></svg>
        </div>
        <button type="button" aria-label="Isolate objects" className="size-4">
          <svg viewBox="0 0 16 16"><path d="M2.500 3.500h4v4h-4zM7 14l2.500-5 2.500 5z" fill="none" stroke={L} /><circle cx="11.500" cy="5.500" r="2" fill="none" stroke={L} /></svg>
        </button>
        <button type="button" aria-label="Settings" className="flex size-4 items-center justify-center text-[#e6eaee]"><Gear className="size-[11px]" /></button>
      </div>
    </footer>
  );
}

export default function App() {
  return (
    <div className="flex min-h-screen bg-black px-28 pt-7 pb-[55px]">
      <div className="flex min-w-0 flex-1 flex-col overflow-hidden rounded-[9px]">
        <Header />
        <FileTabs />
        <div className="flex flex-1">
          <Sidebar />
          <div className="flex min-w-0 flex-1 flex-col">
            <div className="flex flex-1">
              <Drawing />
              <aside className="flex w-[17px] shrink-0 flex-col bg-[#262e3a]">
                <button type="button" aria-label="Expand panels" className="flex h-4 items-center justify-center bg-[#333d4b]"><Chevrons /></button>
                <button type="button" className="flex flex-1 rotate-180 items-center justify-center font-[Roboto,sans-serif] text-[10px] leading-[15px] font-medium text-[#c6cdd6] [writing-mode:vertical-rl]">Layers and Properties</button>
              </aside>
            </div>
            <StatusBar />
          </div>
        </div>
      </div>
    </div>
  );
}
